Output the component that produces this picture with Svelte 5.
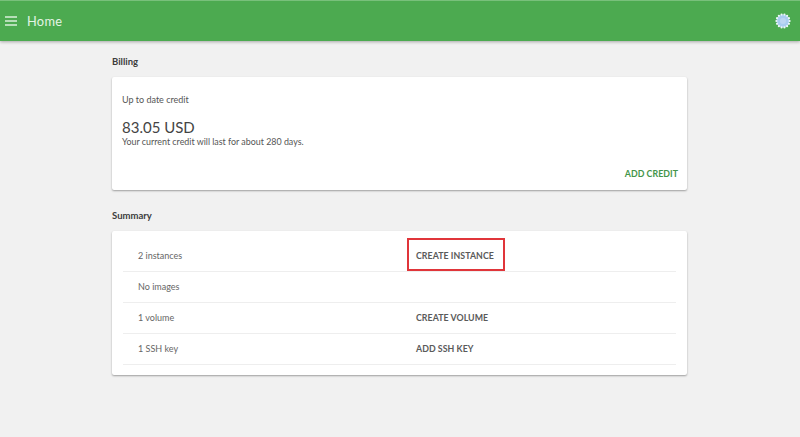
<script>
	const rows = [
		{ label: '2 instances', action: 'CREATE INSTANCE', marked: true },
		{ label: 'No images', action: '' },
		{ label: '1 volume', action: 'CREATE VOLUME' },
		{ label: '1 SSH key', action: 'ADD SSH KEY' }
	];

	// the avatar is a ring of small dots round a pale centre
	const dots = Array.from({ length: 14 }, (_, i) => {
		const a = (i / 14) * Math.PI * 2;
		return { x: 8 + Math.cos(a) * 6.6, y: 8 + Math.sin(a) * 6.6 };
	});
</script>

<div class="page">
	<header class="toolbar">
		<div class="left">
			<svg class="menu" viewBox="0 0 12 10" width="12" height="10">
				<path d="M0 1h12M0 5h12M0 9h12" stroke="#d9f0da" stroke-width="1.5" />
			</svg>
			<span class="title">Home</span>
		</div>
		<svg class="avatar" viewBox="0 0 16 16" width="16" height="16">
			<circle cx="8" cy="8" r="6.5" fill="#a9cdf0" />
			<circle cx="8" cy="8" r="3" fill="#bcd6f3" />
			{#each dots as d}
				<circle cx={d.x} cy={d.y} r="1.1" fill="#eef7fb" />
			{/each}
		</svg>
	</header>

	<main class="content">
		<h2>Billing</h2>
		<section class="card billing">
			<p class="sub">Up to date credit</p>
			<p class="amount">83.05 USD</p>
			<p class="note">Your current credit will last for about 280 days.</p>
			<div class="actions">
				<button class="credit">ADD CREDIT</button>
			</div>
		</section>

		<h2 class="second">Summary</h2>
		<section class="card summary">
			{#each rows as row}
				<div class="row">
					<span class="label">{row.label}</span>
					{#if row.action}
						<button class="action" class:marked={row.marked}>{row.action}</button>
					{/if}
				</div>
			{/each}
		</section>
	</main>
</div>

<style>
	:global(body) {
		margin: 0;
		background: #f1f1f1;
	}

	.page {
		height: 437px;
		overflow: hidden;
		background: #f1f1f1;
		font-family: Lato, 'Open Sans', sans-serif;
		color: #444;
	}

	.toolbar {
		box-sizing: border-box;
		height: 41px;
		padding: 0 9px 1px 5px;
		display: flex;
		align-items: center;
		justify-content: space-between;
		background: #4caa50;
		border-top: 1px solid #78c07b;
		box-shadow: 0 1px 3px rgba(0, 0, 0, 0.3);
		position: relative;
	}

	.left {
		display: flex;
		align-items: center;
		gap: 10px;
	}

	.title {
		color: #e4f4e5;
		font-size: 12.8px;
		letter-spacing: 0.3px;
	}

	.content {
		width: 575px;
		margin-left: 112px;
		padding-top: 15px;
	}

	h2 {
		margin: 0;
		height: 21px;
		font-size: 9.5px;
		line-height: 12px;
		font-weight: 700;
		color: #3c3c3c;
	}

	h2.second {
		margin-top: 20px;
		height: 21px;
	}

	.card {
		background: #fff;
		border-radius: 2px;
		box-shadow: 0 1px 2px rgba(0, 0, 0, 0.35);
	}

	.billing {
		box-sizing: border-box;
		height: 113px;
		padding: 17px 9px 0 10px;
		display: flex;
		flex-direction: column;
	}

	p {
		margin: 0;
	}

	.sub {
		font-size: 9px;
		line-height: 12px;
		color: #555;
	}

	.amount {
		margin-top: 12px;
		font-size: 15px;
		line-height: 18px;
		color: #444;
	}

	.note {
		font-size: 8.9px;
		line-height: 12px;
		color: #555;
	}

	.actions {
		margin-top: 20px;
		display: flex;
		justify-content: flex-end;
	}

	button {
		border: 0;
		background: none;
		padding: 0;
		font: inherit;
		font-weight: 700;
		font-size: 8.8px;
		letter-spacing: 0.05px;
	}

	.credit {
		color: #43954a;
	}

	.summary {
		box-sizing: border-box;
		height: 144px;
		padding: 10px 11px 0;
	}

	.row {
		box-sizing: border-box;
		height: 31px;
		padding: 0 0 2px 15px;
		display: grid;
		grid-template-columns: 278px 1fr;
		align-items: center;
		border-bottom: 1px solid #eee;
		font-size: 9px;
	}

	.label {
		color: #666;
	}

	.action {
		justify-self: start;
		color: #5a5a5a;
		position: relative;
	}

	.marked::after {
		content: '';
		position: absolute;
		left: -9px;
		right: -11px;
		top: -12px;
		bottom: -10px;
		border: 2px solid #e0353a;
	}
</style>
